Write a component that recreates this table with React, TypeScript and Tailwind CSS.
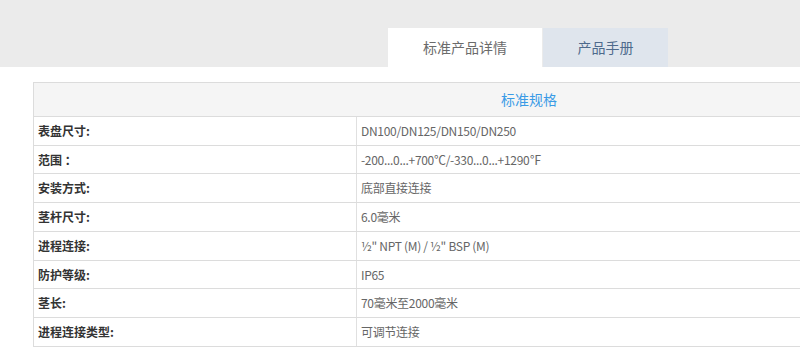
import React from "react";

const rows: { label: string; value: string; h: string }[] = [
  { label: "表盘尺寸:", value: "DN100/DN125/DN150/DN250", h: "h-[29px]" },
  { label: "范围 ：", value: "-200...0...+700℃/-330...0...+1290℉", h: "h-[28px]" },
  { label: "安装方式:", value: "底部直接连接", h: "h-[29px]" },
  { label: "茎杆尺寸:", value: "6.0毫米", h: "h-[29px]" },
  { label: "进程连接:", value: "½\" NPT (M) / ½\" BSP (M)", h: "h-[29px]" },
  { label: "防护等级:", value: "IP65", h: "h-[28px]" },
  { label: "茎长:", value: "70毫米至2000毫米", h: "h-[29px]" },
  { label: "进程连接类型:", value: "可调节连接", h: "h-[29px]" },
];

export default function App() {
  return (
    <div
      className="w-full h-[364px] overflow-hidden bg-white"
      style={{ fontFamily: '"Noto Sans CJK SC", "Open Sans", sans-serif' }}
    >
      <div className="h-[67px] bg-[#ebebeb] flex items-end pl-[388px] gap-[1px]">
        <div className="w-[154px] h-[39px] bg-white flex items-center justify-center text-[14px] text-[#6b6b6b]">
          标准产品详情
        </div>
        <div className="w-[125px] h-[39px] bg-[#dfe5ed] flex items-center justify-center text-[14px] text-[#4e6a8c]">
          产品手册
        </div>
      </div>
      <div className="mt-[15px] ml-[33px] w-[992px] border-t border-l border-r border-[#dcdcdc]">
        <div className="h-[34px] bg-[#f5f5f5] border-b border-[#dcdcdc] flex items-center justify-center text-[14px] text-[#3a9be6]">
          标准规格
        </div>
        {rows.map((r) => (
          <div key={r.label} className={`${r.h} flex border-b border-[#dcdcdc]`}>
            <div className="w-[323px] shrink-0 border-r border-[#e0e0e0] flex items-center pl-[4px] text-[12px] font-bold text-[#333333]">
              {r.label}
            </div>
            <div className="flex-1 flex items-center pl-[4px] text-[12px] tracking-[-0.3px] text-[#666666]">
              {r.value}
            </div>
          </div>
        ))}
      </div>
    </div>
  );
}
